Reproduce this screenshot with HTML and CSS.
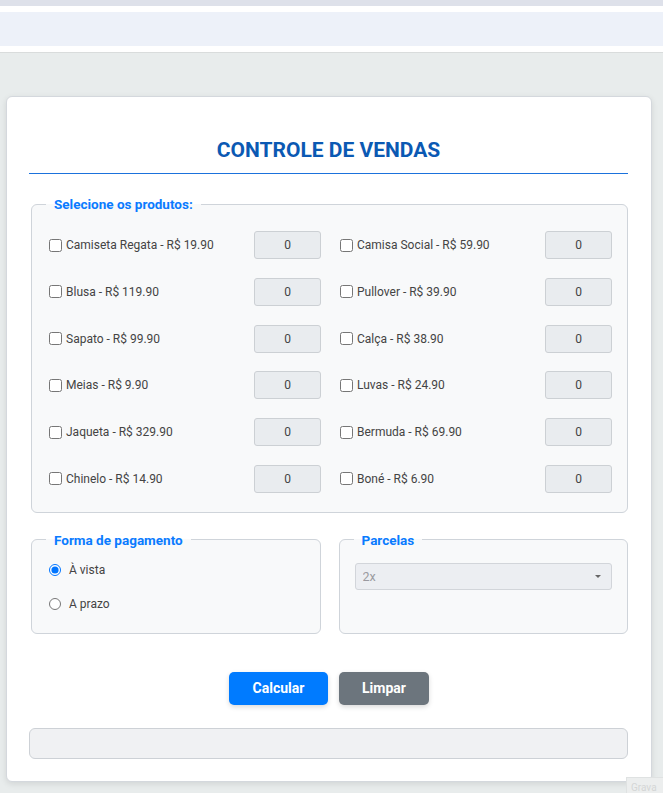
FILE: index.html
```html
<!DOCTYPE html>
<html lang="pt-BR">
<head>
<meta charset="utf-8">
<title>Controle de Vendas</title>
<link rel="stylesheet" href="styles.css">
</head>
<body>
<div class="topstrip"></div>
<div class="nav"><div class="nav-band"></div></div>
<main class="card">
  <h1 class="title">CONTROLE DE VENDAS</h1>
  <fieldset class="box products">
    <legend>Selecione os produtos:</legend>
    <div class="grid">
      <div class="item"><label><input type="checkbox"> Camiseta Regata - R$ 19.90</label><input class="qty" type="text" value="0" disabled></div>
      <div class="item"><label><input type="checkbox"> Camisa Social - R$ 59.90</label><input class="qty" type="text" value="0" disabled></div>
      <div class="item"><label><input type="checkbox"> Blusa - R$ 119.90</label><input class="qty" type="text" value="0" disabled></div>
      <div class="item"><label><input type="checkbox"> Pullover - R$ 39.90</label><input class="qty" type="text" value="0" disabled></div>
      <div class="item"><label><input type="checkbox"> Sapato - R$ 99.90</label><input class="qty" type="text" value="0" disabled></div>
      <div class="item"><label><input type="checkbox"> Calça - R$ 38.90</label><input class="qty" type="text" value="0" disabled></div>
      <div class="item"><label><input type="checkbox"> Meias - R$ 9.90</label><input class="qty" type="text" value="0" disabled></div>
      <div class="item"><label><input type="checkbox"> Luvas - R$ 24.90</label><input class="qty" type="text" value="0" disabled></div>
      <div class="item"><label><input type="checkbox"> Jaqueta - R$ 329.90</label><input class="qty" type="text" value="0" disabled></div>
      <div class="item"><label><input type="checkbox"> Bermuda - R$ 69.90</label><input class="qty" type="text" value="0" disabled></div>
      <div class="item"><label><input type="checkbox"> Chinelo - R$ 14.90</label><input class="qty" type="text" value="0" disabled></div>
      <div class="item"><label><input type="checkbox"> Boné - R$ 6.90</label><input class="qty" type="text" value="0" disabled></div>
    </div>
  </fieldset>
  <div class="pay-row">
    <fieldset class="box pay">
      <legend>Forma de pagamento</legend>
      <label class="radio"><input type="radio" name="pg" checked> À vista</label>
      <label class="radio"><input type="radio" name="pg"> A prazo</label>
    </fieldset>
    <fieldset class="box pay">
      <legend>Parcelas</legend>
      <div class="select-wrap">
        <select class="select" disabled><option>2x</option></select>
      </div>
    </fieldset>
  </div>
  <div class="actions">
    <button class="btn btn-primary" type="button">Calcular</button>
    <button class="btn btn-secondary" type="button">Limpar</button>
  </div>
  <div class="result"></div>
</main>
<div class="stamp">Grava</div>
</body>
</html>
```
FILE: styles.css
```css
* { box-sizing: border-box; }
html, body { margin: 0; padding: 0; }
body {
  background: #e8ecec;
  font-family: Roboto, "Liberation Sans", sans-serif;
  color: #444;
  min-height: 793px;
  overflow: hidden;
}
.topstrip { height: 6px; background: #dee1ea; }
.nav {
  background: #fff;
  padding: 6px 0;
  border-bottom: 1px solid #d9dcdc;
}
.nav-band { height: 34px; background: #edf1f9; }

.card {
  margin: 43px 11px 0 6px;
  background: #fff;
  border: 1px solid #d4d8dd;
  border-radius: 6px;
  box-shadow: 0 2px 6px rgba(0,0,0,0.10);
  padding: 0 23px 22px 22px;
}
.title {
  margin: 41px 0 0;
  font-size: 21px;
  line-height: 24px;
  font-weight: 700;
  color: #0b59b3;
  text-align: center;
  padding-bottom: 11px;
  border-bottom: 1px solid #1b72dc;
}
.box {
  margin: 21px 0 0 2px;
  border: 1px solid #cfd4da;
  border-radius: 6px;
  background: #f8f9fa;
  padding: 18px 15px 19px 14px;
  min-width: 0;
}
.box legend {
  padding: 0 8px;
  font-size: 13.5px;
  line-height: 18px;
  font-weight: 700;
  color: #0a7bff;
}
.grid {
  display: grid;
  grid-template-columns: 1fr 1fr;
  column-gap: 16px;
  row-gap: 18.8px;
}
.item {
  display: flex;
  align-items: center;
  justify-content: space-between;
  height: 28px;
}
.item label {
  display: flex;
  align-items: center;
  font-size: 12px;
  color: #444;
}
.item input[type=checkbox] {
  width: 13px;
  height: 13px;
  margin: 0 4px 0 3px;
}
.qty {
  width: 67px;
  height: 28px;
  border: 1px solid #ccd0d4;
  border-radius: 3px;
  background: #e9ecef;
  text-align: center;
  font-family: Roboto, "Liberation Sans", sans-serif;
  font-size: 12px;
  color: #444;
  padding: 0;
}
.pay-row {
  display: grid;
  grid-template-columns: 1fr 1fr;
  column-gap: 18px;
  margin-top: 18px;
  padding-left: 2px;
}
.pay-row .box {
  margin: 0;
  padding: 11px 15px 19px 14px;
}
.radio {
  display: flex;
  align-items: center;
  height: 20px;
  font-size: 12px;
  color: #444;
}
.radio + .radio { margin-top: 14px; }
.radio input {
  width: 12px;
  height: 12px;
  margin: 0 8px 0 3px;
}
.select-wrap {
  position: relative;
  margin: 3px 0 0 1px;
}
.select-wrap::after {
  content: "";
  position: absolute;
  right: 11px;
  top: 12px;
  border-left: 3px solid transparent;
  border-right: 3px solid transparent;
  border-top: 3px solid #666;
}
.select {
  appearance: none;
  -webkit-appearance: none;
  width: 100%;
  height: 27px;
  border: 1px solid #d2d5da;
  border-radius: 3px;
  background: #eceef2;
  color: #9a9aa0;
  font-family: Roboto, "Liberation Sans", sans-serif;
  font-size: 12.5px;
  padding: 0 7px;
  opacity: 1;
}
.actions {
  display: flex;
  justify-content: center;
  gap: 11px;
  margin-top: 38px;
}
.btn {
  height: 33px;
  border: none;
  border-radius: 5px;
  color: #fff;
  font-family: Roboto, "Liberation Sans", sans-serif;
  font-size: 14px;
  font-weight: 700;
  box-shadow: 0 2px 5px rgba(0,0,0,0.15);
  cursor: pointer;
}
.btn-primary { background: #007bff; width: 99px; margin-left: 1px; }
.btn-secondary { background: #6c757d; width: 90px; }
.result {
  margin-top: 23px;
  height: 31px;
  border: 1px solid #cdd1d6;
  border-radius: 6px;
  background: #f0f1f3;
}
.stamp {
  position: absolute;
  left: 626px;
  top: 777px;
  width: 50px;
  height: 20px;
  border: 1px solid #dfe2e2;
  color: #d4d6d6;
  font-size: 10px;
  padding: 4px 4px;
  background: #eceeee;
}
```
